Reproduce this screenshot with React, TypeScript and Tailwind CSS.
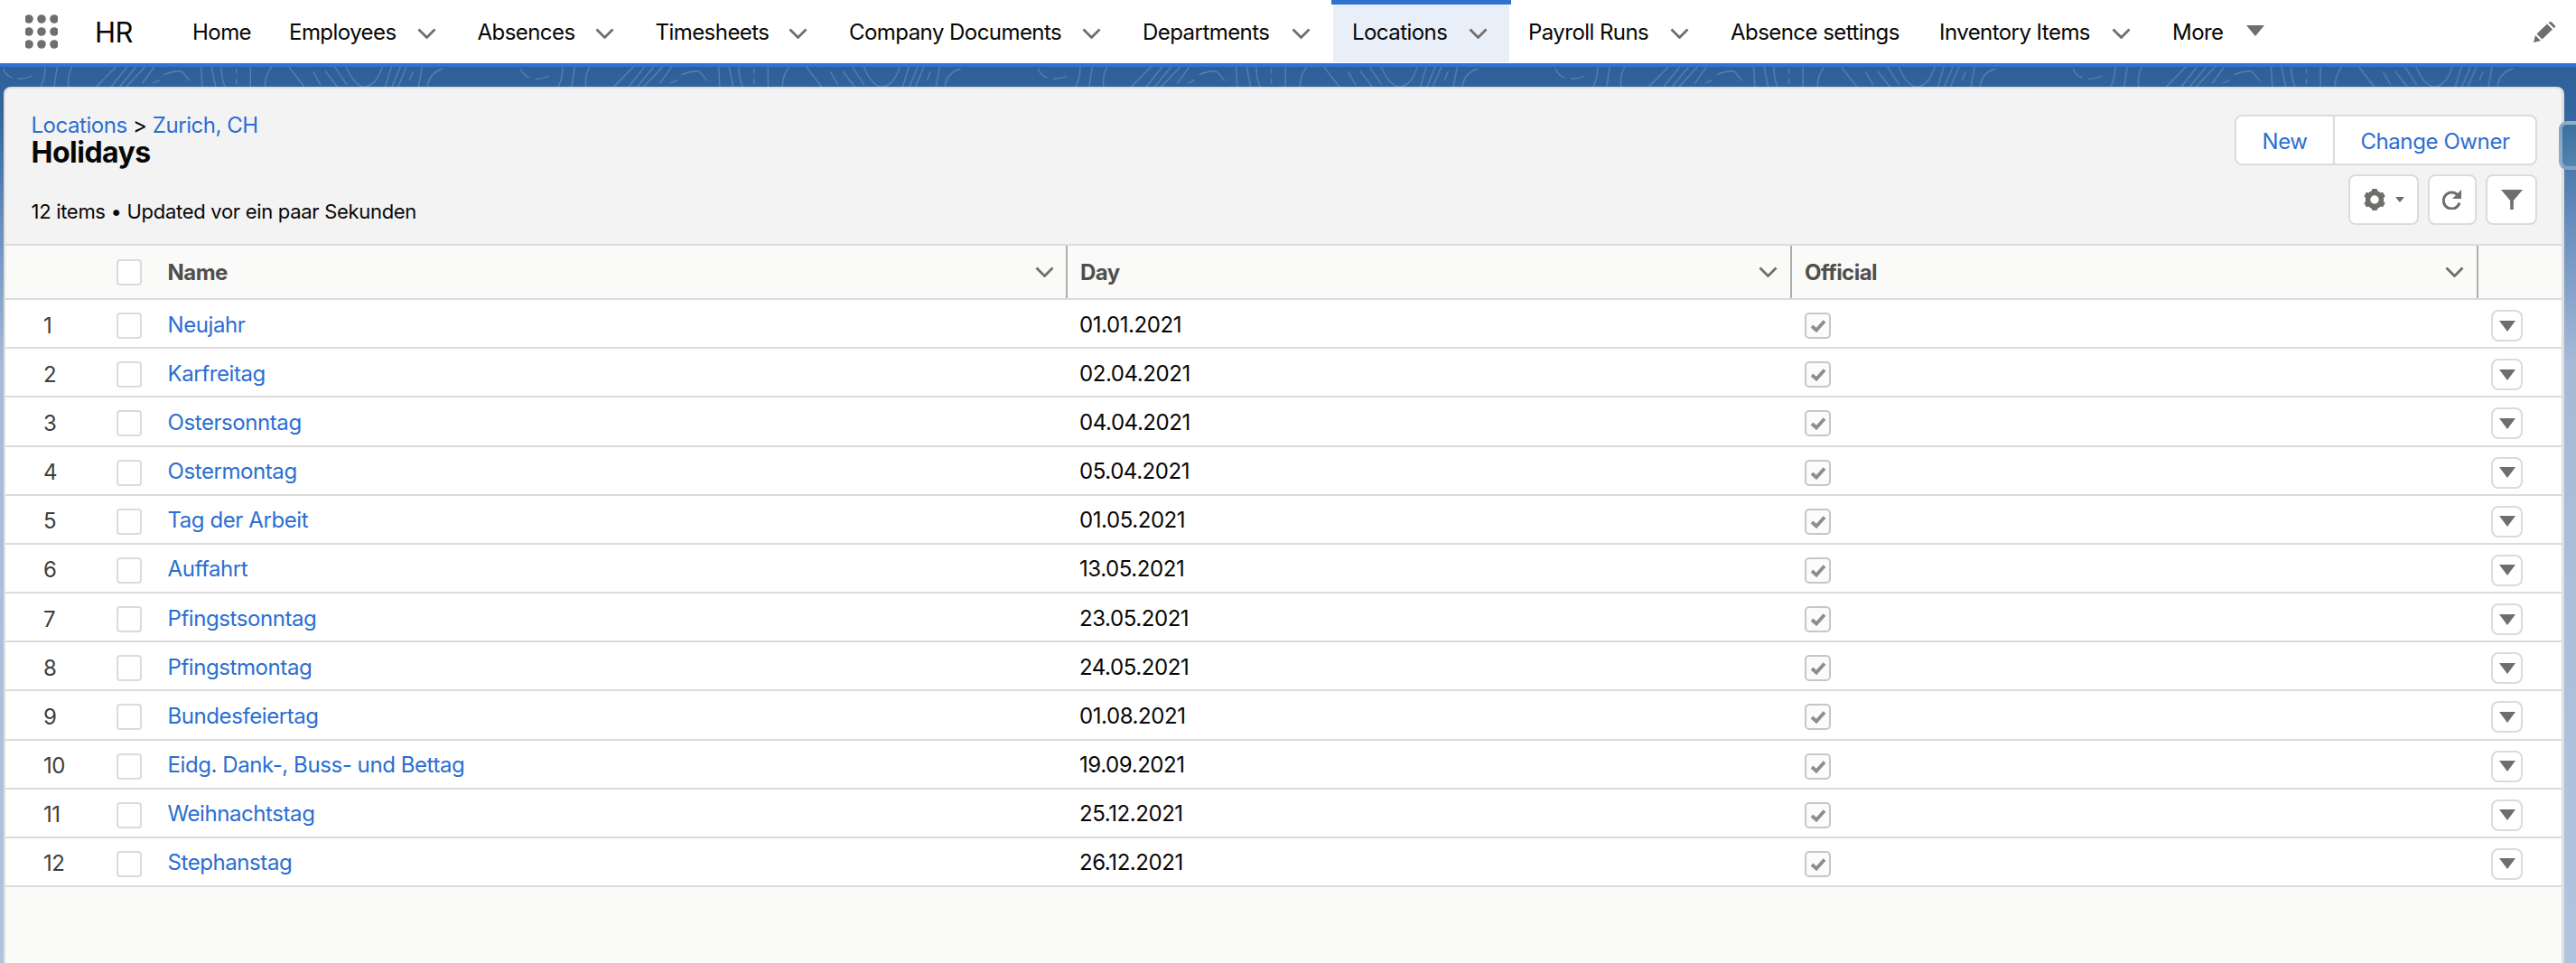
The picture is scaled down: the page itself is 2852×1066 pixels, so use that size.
import React from "react";

const Chevron = ({ className = "" }: { className?: string }) => (
  <svg width="21" height="12" viewBox="0 0 21 12" fill="none" className={className}>
    <path d="M1.5 1.5 L10.5 10.5 L19.5 1.5" stroke="#706e6b" strokeWidth="2.8" />
  </svg>
);

const Tri = ({ w, h }: { w: number; h: number }) => (
  <svg width={w} height={h} viewBox="0 0 18 12" preserveAspectRatio="none">
    <path d="M0 0 H18 L9 12 Z" fill="#706e6b" />
  </svg>
);

const navItems = [
  { label: "Home", w: "w-[107px]", chev: false },
  { label: "Employees", w: "w-[208.5px]", chev: true },
  { label: "Absences", w: "w-[197px]", chev: true },
  { label: "Timesheets", w: "w-[214.5px]", chev: true },
  { label: "Company Documents", w: "w-[325px]", chev: true },
  { label: "Departments", w: "w-[232px]", chev: true },
  { label: "Payroll Runs", w: "w-[224px]", chev: true },
  { label: "Absence settings", w: "w-[231px]", chev: false },
  { label: "Inventory Items", w: "w-[258px]", chev: true },
];

const rows = [
  ["Neujahr", "01.01.2021"],
  ["Karfreitag", "02.04.2021"],
  ["Ostersonntag", "04.04.2021"],
  ["Ostermontag", "05.04.2021"],
  ["Tag der Arbeit", "01.05.2021"],
  ["Auffahrt", "13.05.2021"],
  ["Pfingstsonntag", "23.05.2021"],
  ["Pfingstmontag", "24.05.2021"],
  ["Bundesfeiertag", "01.08.2021"],
  ["Eidg. Dank-, Buss- und Bettag", "19.09.2021"],
  ["Weihnachtstag", "25.12.2021"],
  ["Stephanstag", "26.12.2021"],
];

const NavItem = ({ label, w, chev }: { label: string; w: string; chev: boolean }) => (
  <div className={`${w} shrink-0 h-full flex items-center pl-[21px] pr-[25px] justify-between`}>
    <span className="text-[24px] tracking-[-0.55px] text-[#080707] whitespace-nowrap mt-[2px]">{label}</span>
    {chev && <Chevron className="shrink-0 mt-[3px]" />}
  </div>
);

const GridIcon = () => (
  <svg width="36" height="38" viewBox="0 0 36 38" className="shrink-0">
    {[5, 19, 33].map((y) =>
      [4, 18, 32].map((x) => <circle key={`${x}-${y}`} cx={x} cy={y} r="4.8" fill="#706e6b" />)
    )}
  </svg>
);

const Pattern = () => (
  <svg className="absolute left-0 top-0 w-full h-[22px]" aria-hidden="true">
    <defs>
      <pattern id="contour" width="1719" height="66" patternUnits="userSpaceOnUse" patternTransform="scale(0.3333)">
        <path
          fill="none"
          stroke="rgba(255,255,255,0.2)"
          strokeWidth="4"
          d="M10 6 Q20 30 40 36 M60 40 Q85 40 105 30 M150 0 Q150 40 135 66 M190 0 L180 66 M240 0 Q222 30 228 66
             M385 0 L320 66 M422 0 L370 66 M452 0 L398 66 M482 0 L420 66 M512 0 L472 56 M508 54 L530 44 M545 26 Q585 10 605 16 L630 46
             M668 0 L672 66 M703 0 L716 66 M735 0 Q735 40 748 66 M785 6 V22 M785 40 V56 M832 0 V66 M902 0 Q880 30 880 66
             M960 0 L1010 66 M1040 16 L1065 60 M1080 14 L1120 66 M1112 0 L1152 60 M1150 0 Q1180 70 1215 66 Q1250 60 1270 0
             M1300 0 L1280 66 M1330 0 L1302 66 M1350 0 L1322 66 M1372 16 L1360 46 M1402 0 L1390 66 M1472 6 Q1425 20 1420 66"
        />
      </pattern>
    </defs>
    <rect width="100%" height="22" fill="url(#contour)" />
  </svg>
);

const Box = ({ children, className = "" }: { children?: React.ReactNode; className?: string }) => (
  <div className={`border-2 border-[#dddbda] bg-white rounded-[8px] flex items-center justify-center ${className}`}>
    {children}
  </div>
);

const Checkbox = () => <div className="w-[28px] h-[29px] border-2 border-[#dddbda] rounded-[4px] bg-white shrink-0" />;

const Checked = () => (
  <div className="w-[29px] h-[29px] border-2 border-[#c9c7c5] rounded-[5px] bg-[#fbfbfb] flex items-center justify-center shrink-0">
    <svg width="18" height="15" viewBox="0 0 18 15" fill="none">
      <path d="M2 8 L7 12.5 L16 2.5" stroke="#8f8d8b" strokeWidth="3.8" />
    </svg>
  </div>
);

export default function App() {
  return (
    <div className="w-full h-[1066px] overflow-hidden flex flex-col font-['Inter',sans-serif]">
      <header className="h-[70px] shrink-0 bg-white flex items-center">
        <div className="w-[192px] shrink-0 h-full flex items-center pl-[28px]">
          <GridIcon />
          <span className="ml-[41px] mt-[2px] text-[31px] tracking-[-0.5px] text-[#080707]">HR</span>
        </div>
        <NavItem {...navItems[0]} />
        <NavItem {...navItems[1]} />
        <NavItem {...navItems[2]} />
        <NavItem {...navItems[3]} />
        <NavItem {...navItems[4]} />
        <NavItem {...navItems[5]} />
        <div className="relative w-[195px] shrink-0 h-full flex items-center justify-between pl-[21px] pr-[24px] bg-[#e9eff9] mb-[4px] mt-[2px]">
          <div className="absolute left-[-2px] right-[-2px] top-0 h-[6px] bg-[#2f72d1]" />
          <span className="text-[24px] tracking-[-0.55px] text-[#080707] whitespace-nowrap mt-[4px]">Locations</span>
          <Chevron className="shrink-0 mt-[5px]" />
        </div>
        <NavItem {...navItems[6]} />
        <NavItem {...navItems[7]} />
        <NavItem {...navItems[8]} />
        <div className="shrink-0 flex items-center pl-[21px]">
          <span className="text-[24px] tracking-[-0.55px] text-[#080707] mt-[2px]">More</span>
          <span className="ml-[25px] mt-[-2px] flex"><Tri w={20} h={12} /></span>
        </div>
        <div className="ml-auto mr-[22px] flex">
          <svg width="25" height="23" viewBox="0 0 25 23">
            <path d="M0 23 L2 15 L8 21 Z M3.5 13.5 L15 2.5 L21 8.5 L9.5 19.5 Z M16.5 1 L18 0 Q19 0 20 0.5 L23.5 4 Q24.5 5 24 6 L22.5 7 Z" fill="#706e6b" />
          </svg>
        </div>
      </header>
      <div className="h-[4px] shrink-0 bg-[#2f72d1]" />

      <main className="relative flex-1 flex flex-col bg-[linear-gradient(180deg,#2e5f99_0px,#35689f_60px,#6a90bf_180px,#a6bad8_330px,#b2c3de_992px)]">
        <Pattern />
        <div className="absolute top-[60px] right-0 w-[19px] h-[54px] rounded-l-[9px] border-[4px] border-r-0 border-[rgba(235,240,245,0.4)] z-10 bg-[linear-gradient(160deg,#3a6f9f,#5585b0)]" />

        <section className="relative mt-[22px] ml-[4px] mr-[13px] flex-1 flex flex-col rounded-t-[8px] overflow-hidden bg-[#f3f3f3] border-t-2 border-l-2 border-r-[3px] border-[#dfdfdf]">
          <div className="h-[172px] shrink-0 flex justify-between pl-[28.5px] pr-[27px]">
            <div className="flex flex-col">
              <div className="mt-[25px] text-[24px] leading-[32px] tracking-[-0.45px] text-[#080707]">
                <a className="text-[#2b6ed1]">Locations</a> &gt; <a className="text-[#2b6ed1]">Zurich, CH</a>
              </div>
              <h1 className="mt-[-6px] text-[32px] leading-[40px] font-bold tracking-[-0.5px] text-[#080707]">Holidays</h1>
              <p className="mt-[30px] text-[22px] leading-[30px] tracking-[-0.3px] text-[#080707]">12 items • Updated vor ein paar Sekunden</p>
            </div>
            <div className="flex flex-col items-end pt-[29px] gap-[10px]">
              <div className="flex h-[56px] border-2 border-[#dddbda] rounded-[8px] bg-white text-[24px] tracking-[-0.4px] text-[#2b6ed1]">
                <div className="w-[109px] pt-[3px] flex items-center justify-center border-r-2 border-[#dddbda]">New</div>
                <div className="w-[222px] pt-[3px] flex items-center justify-center">Change Owner</div>
              </div>
              <div className="flex gap-[10px]">
                <Box className="w-[78px] h-[56px] gap-[11px]">
                  <svg width="24" height="24" viewBox="0 0 24 24">
                    <circle cx="12" cy="12" r="7.5" fill="none" stroke="#706e6b" strokeWidth="5.5" />
                    <g fill="#706e6b">
                      <rect x="9" y="0" width="6" height="5" rx="1.2" />
                      <rect x="9" y="19" width="6" height="5" rx="1.2" />
                      <rect x="9" y="0" width="6" height="5" rx="1.2" transform="rotate(60 12 12)" />
                      <rect x="9" y="0" width="6" height="5" rx="1.2" transform="rotate(120 12 12)" />
                      <rect x="9" y="0" width="6" height="5" rx="1.2" transform="rotate(240 12 12)" />
                      <rect x="9" y="0" width="6" height="5" rx="1.2" transform="rotate(300 12 12)" />
                    </g>
                  </svg>
                  <Tri w={10} h={6} />
                </Box>
                <Box className="w-[54px] h-[56px]">
                  <svg width="22" height="22" viewBox="0 0 22 22" fill="none">
                    <path d="M17 6 A9 9 0 1 0 19 14.5" stroke="#706e6b" strokeWidth="3" />
                    <path d="M21 0 V10 H11 Z" fill="#706e6b" />
                  </svg>
                </Box>
                <Box className="w-[57px] h-[56px]">
                  <svg width="24" height="22" viewBox="0 0 24 22">
                    <path d="M0 0 H24 L13.8 12 V22 H10.2 V12 Z" fill="#706e6b" />
                  </svg>
                </Box>
              </div>
            </div>
          </div>

          <div className="h-[62px] shrink-0 flex bg-[#fafaf9] border-y-2 border-[#dddbda] text-[24px] font-bold tracking-[-0.55px] text-[#514f4d]">
            <div className="w-[122.5px] shrink-0" />
            <div className="w-[57px] shrink-0 flex items-center"><Checkbox /></div>
            <div className="w-[996.5px] shrink-0 flex items-center justify-between pr-[13px] border-r-2 border-[#b0adab]">
              <span className="mt-[2px]">Name</span>
              <Chevron />
            </div>
            <div className="w-[802px] shrink-0 flex items-center justify-between pl-[14px] pr-[14px] border-r-2 border-[#b0adab]">
              <span className="mt-[2px]">Day</span>
              <Chevron />
            </div>
            <div className="w-[760px] shrink-0 flex items-center justify-between pl-[14px] pr-[14px] border-r-2 border-[#b0adab]">
              <span className="mt-[2px]">Official</span>
              <Chevron />
            </div>
            <div className="flex-1" />
          </div>

          <div className="flex-1 bg-[#fafaf9] flex flex-col">
            {rows.map(([name, day], i) => (
              <div key={name} className="h-[54.18px] shrink-0 flex items-center bg-white border-b-2 border-[#dddbda] text-[24px] tracking-[-0.42px] text-[#080707]">
                <div className="w-[122.5px] shrink-0 pl-[42px] pt-[5px] text-[#3e3e3c]">{i + 1}</div>
                <div className="w-[57px] shrink-0 flex items-center pt-[5px]"><Checkbox /></div>
                <div className="w-[996.5px] shrink-0 pt-[3px] text-[#2b6ed1]">{name}</div>
                <div className="w-[802px] shrink-0 pt-[3px] pl-[13px]">{day}</div>
                <div className="w-[760px] shrink-0 pl-[14px] pt-[5px]"><Checked /></div>
                <div className="flex-1 pl-[14px] pt-[5px]">
                  <Box className="w-[35px] h-[35px]"><Tri w={18} h={12} /></Box>
                </div>
              </div>
            ))}
          </div>
        </section>
      </main>
    </div>
  );
}
